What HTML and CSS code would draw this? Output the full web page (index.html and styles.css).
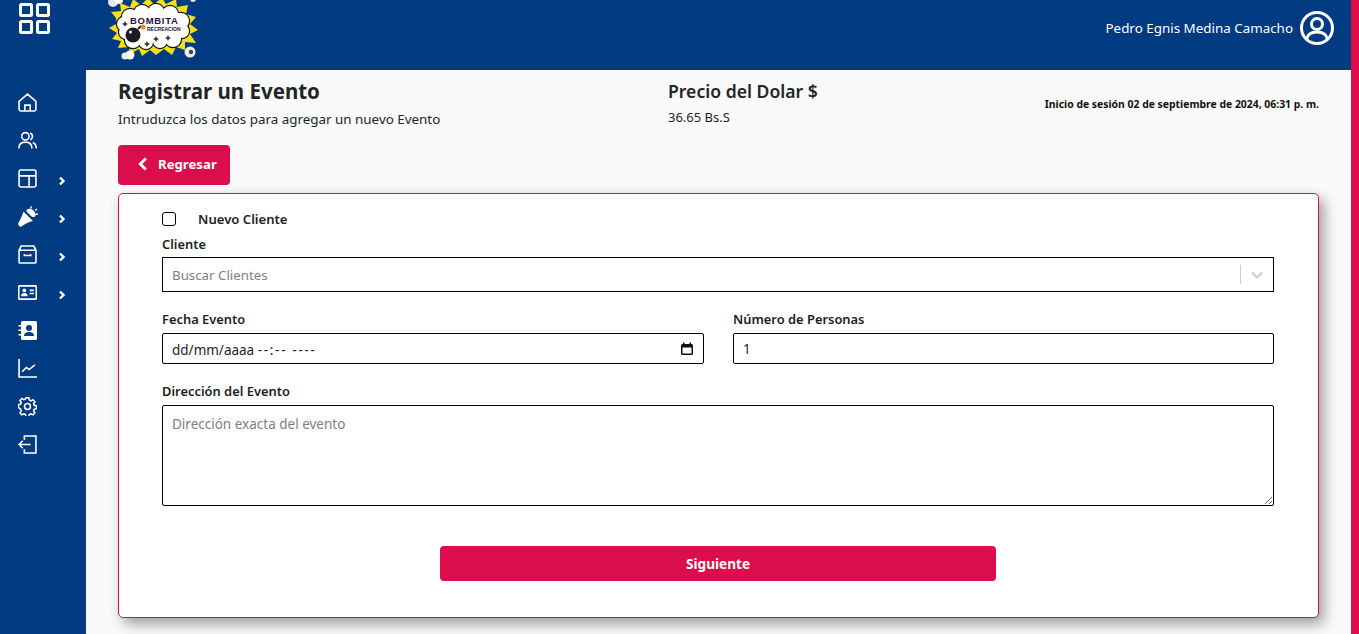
FILE: index.html
```html
<!DOCTYPE html>
<html lang="es">
<head>
    <meta charset="UTF-8">
    <meta name="viewport" content="width=device-width, initial-scale=1.0">
    <title>Registrar un Evento</title>
    <link rel="stylesheet" href="styles.css">
</head>
<body>
    <div class="shell">
        <header class="topbar">
            <svg class="apps-icon" viewBox="0 0 31 31" fill="none" stroke="#fff" stroke-width="3">
                <rect x="1.5" y="1.5" width="11" height="11" rx="1"/>
                <rect x="18.5" y="1.5" width="11" height="11" rx="1"/>
                <rect x="1.5" y="18.5" width="11" height="11" rx="1"/>
                <rect x="18.5" y="18.5" width="11" height="11" rx="1"/>
            </svg>
            <svg class="logo" viewBox="0 0 94 62">
                <circle cx="7" cy="4" r="5" fill="#e8e8e8"/>
                <circle cx="13" cy="2" r="4" fill="#fff"/>
                <circle cx="87" cy="1" r="3" fill="#e8e8e8"/>
                <polygon fill="#f3e01a" points="10,20 5,14 15,13 14,5 24,9 27,1 35,7 42,0 48,6 56,0 60,6 70,1 71,9 82,7 80,16 90,19 84,26 92,32 84,36 90,45 79,44 79,52 70,49 66,57 58,51 50,57 44,52 36,58 33,51 24,56 23,49 12,50 15,43 6,41 11,35 3,30 10,26"/>
                <g fill="#111" stroke="#111" stroke-width="2.400">
                    <circle cx="24" cy="19" r="8"/><circle cx="36" cy="15" r="8"/><circle cx="50" cy="14" r="8"/><circle cx="64" cy="16" r="8"/>
                    <circle cx="75" cy="23" r="8"/><circle cx="76" cy="33" r="7"/><circle cx="67" cy="41" r="8"/><circle cx="54" cy="43" r="7"/>
                    <circle cx="40" cy="44" r="7"/><circle cx="27" cy="42" r="8"/><circle cx="20" cy="34" r="7"/><circle cx="18" cy="26" r="7"/>
                </g>
                <g fill="#fff">
                    <circle cx="24" cy="19" r="8"/><circle cx="36" cy="15" r="8"/><circle cx="50" cy="14" r="8"/><circle cx="64" cy="16" r="8"/>
                    <circle cx="75" cy="23" r="8"/><circle cx="76" cy="33" r="7"/><circle cx="67" cy="41" r="8"/><circle cx="54" cy="43" r="7"/>
                    <circle cx="40" cy="44" r="7"/><circle cx="27" cy="42" r="8"/><circle cx="20" cy="34" r="7"/><circle cx="18" cy="26" r="7"/>
                    <rect x="22" y="15" width="52" height="29"/>
                </g>
                <circle cx="27" cy="37" r="7.500" fill="#1c1c24"/>
                <circle cx="24.500" cy="34" r="1.500" fill="#fff"/>
                <path stroke="#1c1c24" stroke-width="2" d="M32 31l3-3"/>
                <circle cx="37" cy="29" r="2.500" fill="#f08a1c"/>
                <text class="logo-main" x="24" y="26">BOMBITA</text>
                <text class="logo-sub" x="41" y="33">RECREACION</text>
                <path fill="#333" d="M50 38l1 2 2 1-2 1-1 2-1-2-2-1 2-1zM62 37l1 2 2 1-2 1-1 2-1-2-2-1 2-1zM41 43l1 2 2 1-2 1-1 2-1-2-2-1 2-1zM19 23l1 2 2 1-2 1-1 2-1-2-2-1 2-1z"/>
                <circle cx="24" cy="57" r="4.500" fill="#fff"/>
                <circle cx="19" cy="58" r="3.500" fill="#eee"/>
                <circle cx="84" cy="54" r="5.500" fill="#eee"/>
                <circle cx="85" cy="54" r="2.200" fill="#444"/>
            </svg>
            <div class="user">
                <span class="user-name">Pedro Egnis Medina Camacho</span>
                <svg class="user-icon" viewBox="0 0 36 36" fill="none" stroke="#fff" stroke-width="3">
                    <circle cx="18" cy="18" r="15.500"/>
                    <circle cx="18" cy="14" r="5.500"/>
                    <path d="M7.500 29.500c1-5.500 5-7.500 10.500-7.500s9.500 2 10.500 7.500"/>
                </svg>
            </div>
        </header>
        <div class="workspace">
            <nav class="sidebar">
                <a class="nav-item">
                    <svg class="nav-icon" viewBox="0 0 18 18"><path d="M1 8l8-7 8 7v7.500a1.500 1.500 0 0 1-1.500 1.500h-13a1.500 1.500 0 0 1-1.500-1.500zM6.500 17v-5.500h5V17"/></svg>
                </a>
                <a class="nav-item">
                    <svg class="nav-icon" viewBox="0 0 18 18"><circle cx="7" cy="5" r="3.500"/><path d="M.8 16.500c0-4 2.500-6 6.200-6s6.200 2 6.200 6M11.500 1.800a3.500 3.500 0 0 1 0 6.500M14 10.800c2 .8 3.300 2.700 3.300 5.700"/></svg>
                </a>
                <a class="nav-item">
                    <svg class="nav-icon" viewBox="0 0 18 18"><rect x="1" y="1" width="16" height="16" rx="1.500"/><path d="M1 6.500h16M10.500 6.500V17"/></svg>
                    <svg class="nav-chevron" viewBox="0 0 8 10"><path d="M2 1.500L5.500 5 2 8.500"/></svg>
                </a>
                <a class="nav-item">
                    <svg class="nav-icon party" viewBox="0 0 20 21"><path class="fill" d="M5.500 5.500l9.500 9.500c-4 .8-8 2.800-11 5.300-1.800 1.400-4.600-.8-3.600-3.200 1.800-4 4-7.600 5.100-11.600z"/><path class="fill" d="M9 3.500c1.500-1.500 5-.5 6.500 1s3 4.500 1.500 6c-1 1-3 .5-4-.5l-3.500-3.500c-1-1-1.500-2-.5-3z"/><path class="fill" d="M12.500 .3l1.500.3-.4 2.200-1.400-.3zM18.500 2.500l1 1-1.800 1.500-.9-.9zM17.500 7.500l2.400-.2.100 1.400-2.400.2z"/></svg>
                    <svg class="nav-chevron" viewBox="0 0 8 10"><path d="M2 1.500L5.500 5 2 8.500"/></svg>
                </a>
                <a class="nav-item">
                    <svg class="nav-icon" viewBox="0 0 18 18"><path d="M3 1h12l2 4v11a1 1 0 0 1-1 1H2a1 1 0 0 1-1-1V5zM1 5h16M6 8.500v1.500h6V8.500"/></svg>
                    <svg class="nav-chevron" viewBox="0 0 8 10"><path d="M2 1.500L5.500 5 2 8.500"/></svg>
                </a>
                <a class="nav-item">
                    <svg class="nav-icon" viewBox="0 0 18 14"><rect x=".7" y=".7" width="16.600" height="12.600" rx="1"/><circle class="fill" cx="6" cy="5" r="1.800"/><path class="fill" d="M2.800 10.500c0-2 1.400-3 3.200-3s3.200 1 3.200 3z"/><path d="M11 5h4M11 8h4"/></svg>
                    <svg class="nav-chevron" viewBox="0 0 8 10"><path d="M2 1.500L5.500 5 2 8.500"/></svg>
                </a>
                <a class="nav-item">
                    <svg class="nav-icon solid" viewBox="0 0 19 19"><path fill-rule="evenodd" d="M3 1.500A1.500 1.500 0 0 1 4.500 0h13A1.500 1.500 0 0 1 19 1.500v16a1.500 1.500 0 0 1-1.500 1.500h-13A1.500 1.500 0 0 1 3 17.500zM11 4a3 3 0 1 0 0 6 3 3 0 0 0 0-6zM6 15h10c0-2.500-2-4-5-4s-5 1.500-5 4z"/><path d="M.5 4H3v1.500H.5zM.5 8.500H3V10H.5zM.5 13H3v1.500H.5z"/></svg>
                </a>
                <a class="nav-item">
                    <svg class="nav-icon" viewBox="0 0 18 18"><path d="M1 0v17h17M4 12l4-4 2.500 2L16 5.500"/></svg>
                </a>
                <a class="nav-item">
                    <svg class="nav-icon" viewBox="0 0 18 18"><circle cx="9" cy="9" r="2.800"/><path d="M7.600 1h2.800l.5 2.200 1.500.7 2-1.100 1.800 2-1.200 1.900.5 1.500 2.200.6v2.700l-2.200.6-.5 1.500 1.200 1.900-1.800 2-2-1.100-1.500.7-.5 2.200H7.600l-.5-2.200-1.500-.7-2 1.100-1.800-2 1.200-1.900-.5-1.500L.3 10.300V7.600l2.200-.6.5-1.500-1.200-1.900 1.800-2 2 1.100 1.500-.7z" transform="translate(.1 -.2) scale(.98)"/></svg>
                </a>
                <a class="nav-item">
                    <svg class="nav-icon" viewBox="0 0 18 18"><path d="M6 4.500V1h11v16H6v-3.500M12 9H1M4.500 5.500L1 9l3.500 3.500"/></svg>
                </a>
            </nav>
            <main class="content">
                <div class="page-head">
                    <div class="head-title">
                        <h1>Registrar un Evento</h1>
                        <p>Intruduzca los datos para agregar un nuevo Evento</p>
                    </div>
                    <div class="head-price">
                        <h2>Precio del Dolar $</h2>
                        <p>36.65 Bs.S</p>
                    </div>
                    <div class="head-session">Inicio de sesión 02 de septiembre de 2024, 06:31 p. m.</div>
                </div>
                <button class="btn-back" type="button">
                    <svg viewBox="0 0 10 14"><path d="M8 2L3 7l5 5"/></svg>
                    Regresar
                </button>
                <form class="card">
                    <label class="check-row">
                        <input type="checkbox">
                        <span>Nuevo Cliente</span>
                    </label>
                    <label class="field-label">Cliente</label>
                    <div class="select-box">
                        <span class="select-text">Buscar Clientes</span>
                        <span class="select-sep"></span>
                        <svg class="select-arrow" viewBox="0 0 14 10"><path d="M2 2.500l5 5 5-5"/></svg>
                    </div>
                    <div class="two-cols">
                        <div>
                            <label class="field-label">Fecha Evento</label>
                            <div class="input date-input">
                                <span class="date-text">dd/mm/aaaa <span class="dashes">--:-- ----</span></span>
                                <svg viewBox="0 0 14 14"><path d="M1 3.500A1.500 1.500 0 0 1 2.500 2h9A1.500 1.500 0 0 1 13 3.500v8a1.500 1.500 0 0 1-1.500 1.500h-9A1.500 1.500 0 0 1 1 11.500zM2.500 5.500v6h9v-6zM3 .5h1.500V2H3zM9.500 .5H11V2H9.500z"/></svg>
                            </div>
                        </div>
                        <div>
                            <label class="field-label">Número de Personas</label>
                            <input class="input" type="text" value="1">
                        </div>
                    </div>
                    <label class="field-label address-label">Dirección del Evento</label>
                    <textarea class="input area" placeholder="Dirección exacta del evento"></textarea>
                    <button class="btn-next" type="button">Siguiente</button>
                </form>
            </main>
        </div>
    </div>
    <div class="rail"></div>
</body>
</html>
```

FILE: styles.css
```css
* {
    box-sizing: border-box;
}

html, body {
    height: 100%;
}

body {
    display: flex;
    margin: 0;
    overflow: hidden;
    background-color: #fafafa;
    color: #212529;
    font-family: "Noto Sans", sans-serif;
    font-size: 14px;
}

.shell {
    display: flex;
    flex: 1;
    flex-direction: column;
    min-width: 0;
}

.rail {
    width: 8px;
    background-color: #dc0d4c;
}

.topbar {
    display: flex;
    flex: none;
    height: 70px;
    background-color: #003a80;
    overflow: hidden;
}

.apps-icon {
    width: 31px;
    height: 31px;
    margin: 3px 0 0 19px;
}

.logo {
    width: 94px;
    height: 62px;
    margin: -2px 0 0 56px;
}

.logo-main {
    font-family: "Liberation Sans", sans-serif;
    font-size: 9.500px;
    font-weight: 700;
    letter-spacing: .7px;
    fill: #2a1038;
}

.logo-sub {
    font-family: "Liberation Sans", sans-serif;
    font-size: 5px;
    font-weight: 700;
    fill: #2a1038;
}

.user {
    display: flex;
    align-items: center;
    gap: 6px;
    height: 56px;
    margin-left: auto;
    padding-right: 16px;
    color: #fff;
    font-size: 13.400px;
}

.user-icon {
    width: 36px;
    height: 36px;
}

.workspace {
    display: flex;
    flex: 1;
    min-height: 0;
}

.sidebar {
    flex: none;
    width: 86px;
    padding-top: 13px;
    background-color: #003a80;
}

.nav-item {
    display: flex;
    align-items: center;
    height: 38px;
    padding-left: 18px;
}

.nav-icon {
    width: 19px;
    height: 19px;
    fill: none;
    stroke: #fff;
    stroke-width: 1.500;
}

.nav-icon.solid {
    fill: #fff;
    stroke: none;
}

.nav-icon.party {
    width: 20px;
    height: 21px;
}

.nav-icon .fill {
    fill: #fff;
    stroke: none;
}

.nav-chevron {
    width: 8px;
    height: 10px;
    margin: 5px 0 0 21px;
    fill: none;
    stroke: #fff;
    stroke-width: 2.400;
}

.party + .nav-chevron {
    margin-left: 20px;
}

.content {
    flex: 1;
    min-width: 0;
    padding: 5px 32px 0;
}

.page-head {
    display: flex;
    height: 70px;
}

.head-title {
    width: 550px;
}

.head-title h1,
.head-price h2 {
    margin: 0;
    font-weight: 600;
    line-height: 30px;
}

.head-title h1 {
    padding-top: 1px;
    font-size: 20.500px;
    font-weight: 700;
}

.head-price h2 {
    padding-top: 1px;
    font-size: 17.600px;
}

.head-title p {
    margin: 3px 0 0;
    font-size: 13.400px;
    line-height: 20px;
}

.head-price p {
    margin: 1px 0 0;
    font-size: 13px;
    line-height: 20px;
}

.head-price {
    flex: 1;
}

.head-session {
    padding-top: 22px;
    color: #111;
    font-size: 10.400px;
    font-weight: 700;
}

.btn-back {
    display: flex;
    align-items: center;
    gap: 10px;
    width: 112px;
    height: 40px;
    padding: 0 0 2px 19px;
    border: 0;
    border-radius: 4px;
    background-color: #dc0d4c;
    color: #fff;
    font-family: inherit;
    font-size: 13.200px;
    font-weight: 700;
}

.btn-back svg {
    width: 11px;
    height: 16px;
    fill: none;
    stroke: #fff;
    stroke-width: 2.600;
}

.card {
    height: 425px;
    margin-top: 8px;
    padding: 15px 44px 0 43px;
    border: 1px solid #dc0d4c;
    border-radius: 5px;
    background-color: #fff;
    box-shadow: 5px 6px 14px rgba(0, 0, 0, .38);
}

.check-row {
    display: flex;
    align-items: center;
    gap: 22px;
    height: 20px;
    font-size: 13.100px;
    font-weight: 600;
}

.check-row input {
    width: 14px;
    height: 14px;
    margin: 0;
    appearance: none;
    border: 1px solid #000;
    border-radius: 3px;
    background-color: #fff;
}

.field-label {
    display: block;
    height: 17px;
    margin-top: 7px;
    color: #1b1f23;
    font-size: 12.900px;
    font-weight: 600;
    line-height: 17px;
}

.address-label {
    margin-top: 19px;
}

.select-box {
    display: flex;
    align-items: center;
    height: 35px;
    margin-top: 4px;
    padding: 0 9px;
    border: 1px solid #000;
    color: #808080;
    font-size: 13.300px;
}

.select-text {
    flex: 1;
}

.select-sep {
    width: 1px;
    height: 19px;
    margin-right: 9px;
    background-color: #ccc;
}

.select-arrow {
    width: 14px;
    height: 10px;
    fill: none;
    stroke: #ccc;
    stroke-width: 2;
}

.two-cols {
    display: grid;
    grid-template-columns: 542px 541px;
    gap: 29px;
    margin-top: 12px;
}

.input {
    display: block;
    width: 100%;
    height: 31px;
    margin-top: 5px;
    padding: 0 9px;
    border: 1px solid #000;
    border-radius: 2px;
    background-color: #fff;
    color: #212529;
    font-family: inherit;
    font-size: 13.500px;
}

.date-input {
    display: flex;
    align-items: center;
    justify-content: space-between;
    padding-right: 9px;
}

.date-text {
    padding-top: 2px;
}

.dashes {
    letter-spacing: 1.700px;
}

.date-input svg {
    width: 14px;
    height: 14px;
    fill: #111;
}

.area {
    height: 101px;
    padding-top: 9px;
    resize: vertical;
}

.area::placeholder {
    color: #808080;
    opacity: 1;
}

.btn-next {
    display: block;
    width: 556px;
    height: 35px;
    margin: 40px auto 0;
    border: 0;
    border-radius: 4px;
    background-color: #dc0d4c;
    color: #fff;
    font-family: inherit;
    font-size: 13.600px;
    font-weight: 700;
}
```
